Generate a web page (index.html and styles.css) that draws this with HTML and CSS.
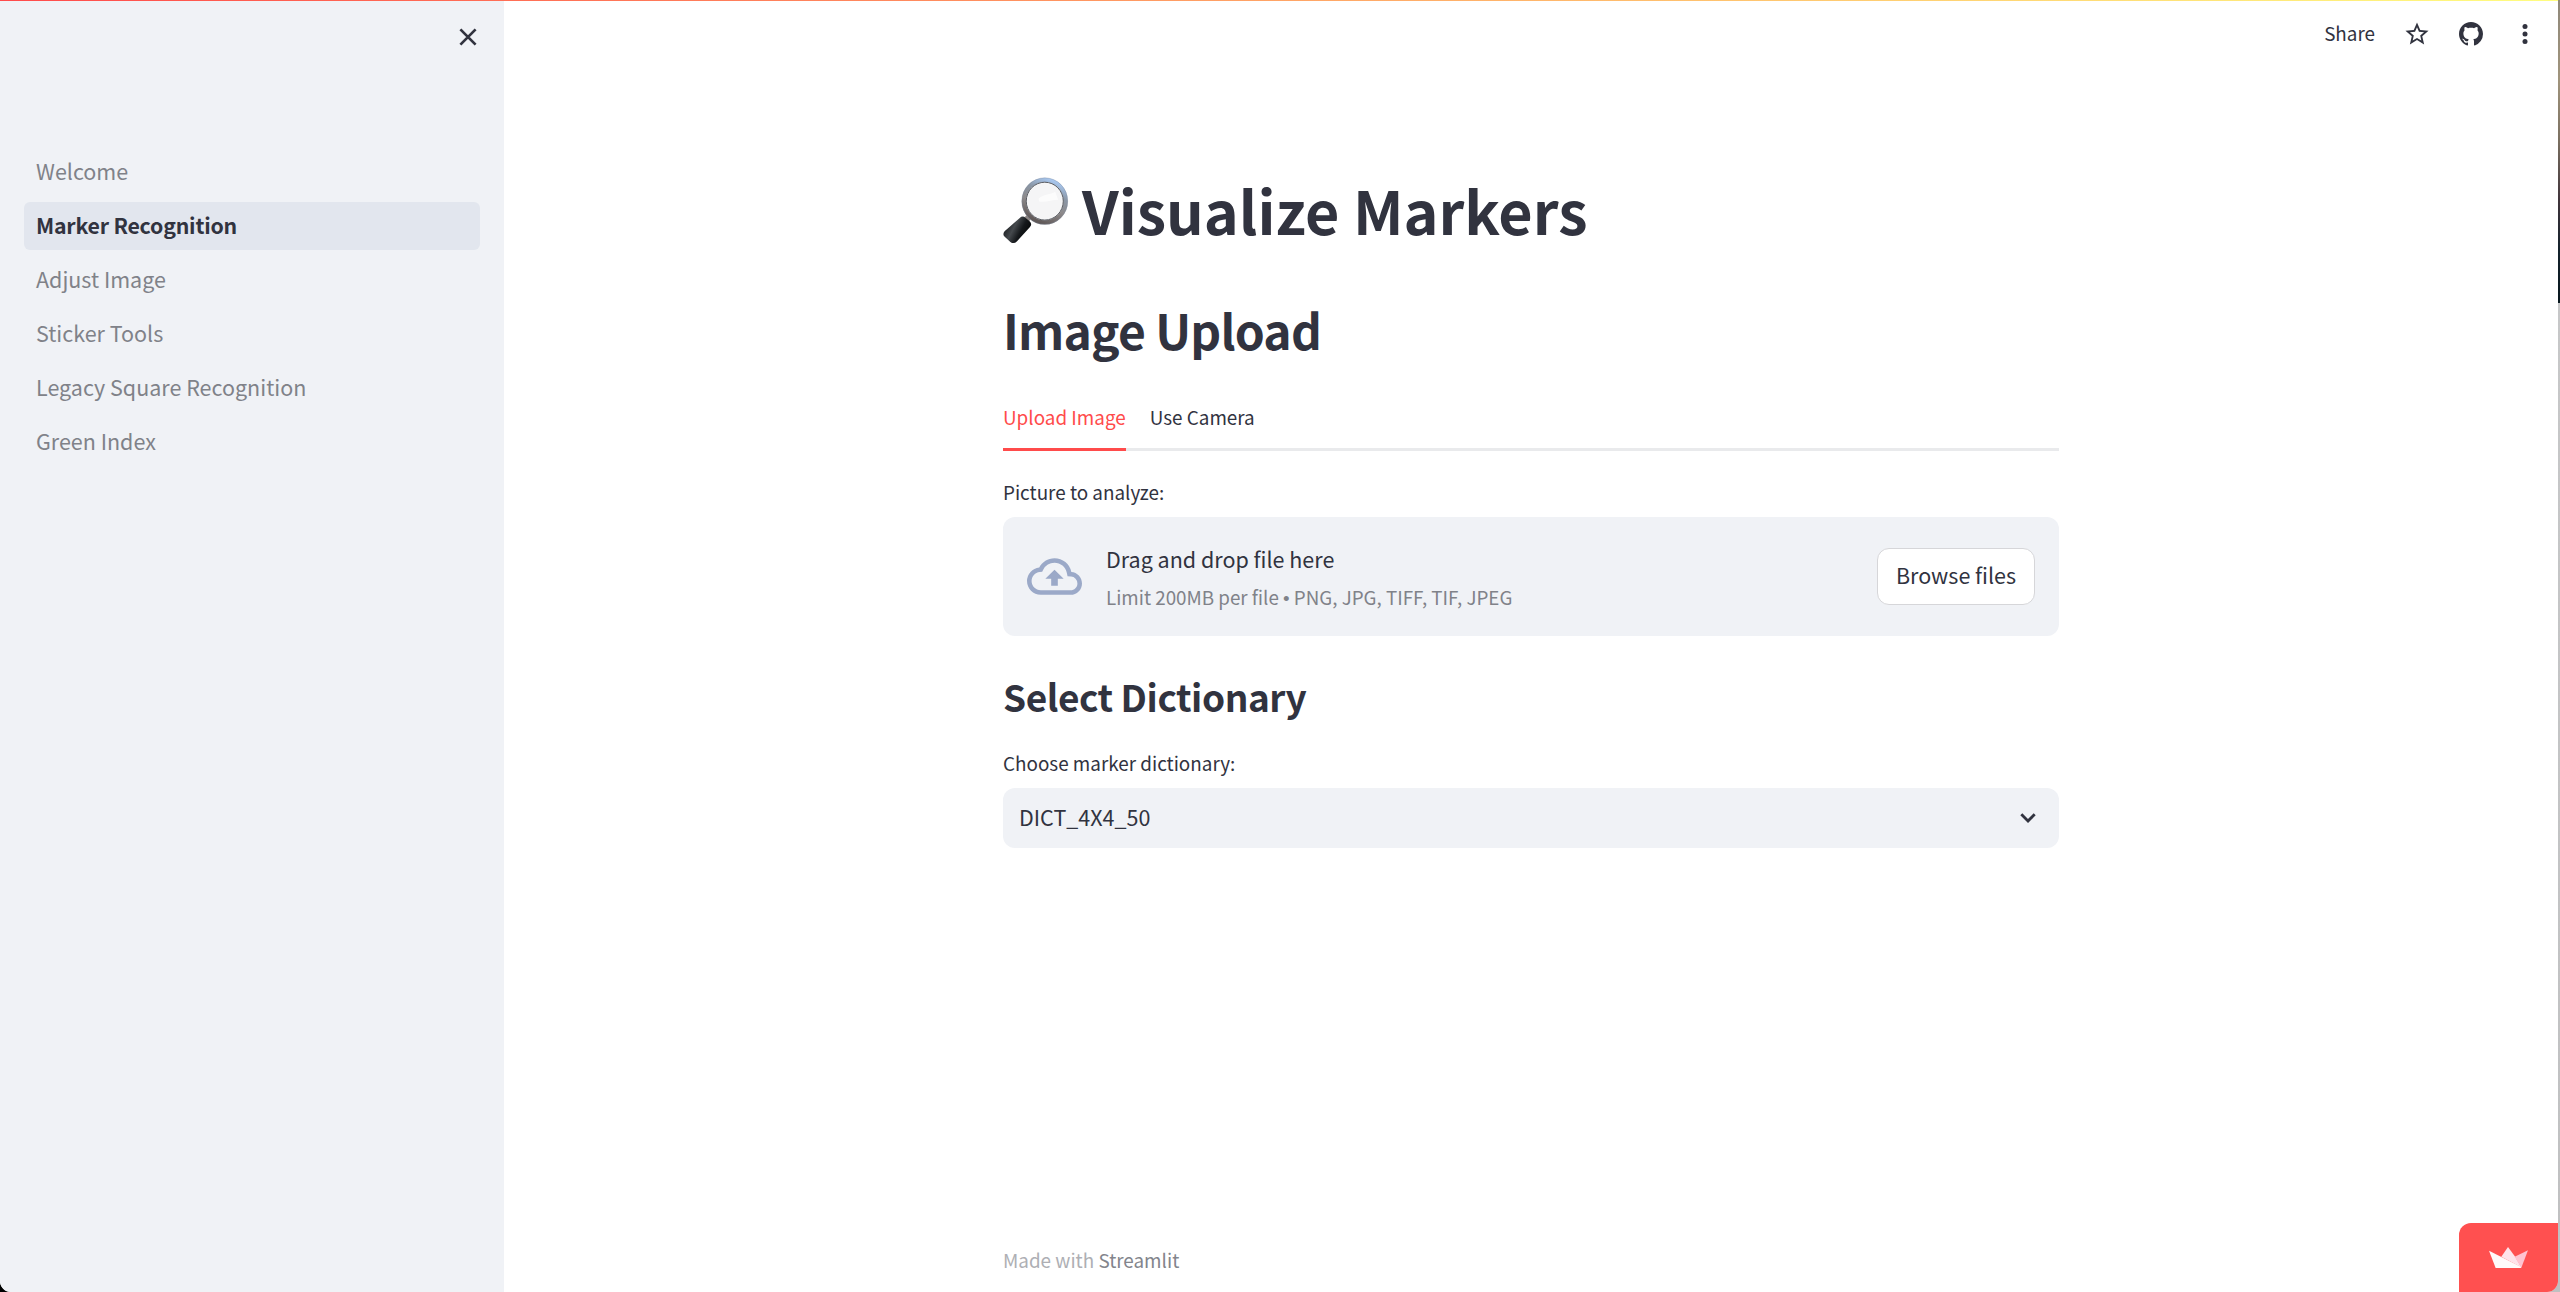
FILE: index.html
```html
<!DOCTYPE html>
<html lang="en">
<head>
<meta charset="utf-8">
<title>Marker Recognition</title>
<link rel="stylesheet" href="styles.css">
</head>
<body>
<div class="desktop">
  <div class="app">
    <div class="decoration"></div>
    <aside class="sidebar">
      <button class="close" aria-label="Close sidebar">
        <svg viewBox="0 0 18 18" width="18" height="18"><path d="M1.4 1.4 16.6 16.6M16.6 1.4 1.4 16.6" fill="none" stroke="currentColor" stroke-width="2.7"/></svg>
      </button>
      <nav class="nav">
        <a class="nav-item">Welcome</a>
        <a class="nav-item active">Marker Recognition</a>
        <a class="nav-item">Adjust Image</a>
        <a class="nav-item">Sticker Tools</a>
        <a class="nav-item">Legacy Square Recognition</a>
        <a class="nav-item">Green Index</a>
      </nav>
    </aside>
    <main class="main">
      <header class="toolbar">
        <span class="share">Share</span>
        <svg class="star" viewBox="1.6 1.6 20.8 20.8" width="24" height="24"><path fill="currentColor" d="M22 9.24l-7.19-.62L12 2 9.19 8.63 2 9.24l5.46 4.73L5.82 21 12 17.27 18.18 21l-1.63-7.03L22 9.24zM12 15.4l-3.76 2.27 1-4.28-3.32-2.88 4.38-.38L12 6.1l1.71 4.04 4.38.38-3.32 2.88 1 4.28L12 15.4z"/></svg>
        <svg class="github" viewBox="0 0 16 16" width="24" height="24"><path fill="currentColor" d="M8 0C3.58 0 0 3.58 0 8c0 3.54 2.29 6.53 5.47 7.59.4.07.55-.17.55-.38 0-.19-.01-.82-.01-1.49-2.01.37-2.53-.49-2.69-.94-.09-.23-.48-.94-.82-1.13-.28-.15-.68-.52-.01-.53.63-.01 1.08.58 1.23.82.72 1.21 1.87.87 2.33.66.07-.52.28-.87.51-1.07-1.78-.2-3.64-.89-3.64-3.95 0-.87.31-1.59.82-2.15-.08-.2-.36-1.02.08-2.12 0 0 .67-.21 2.2.82.64-.18 1.32-.27 2-.27s1.36.09 2 .27c1.53-1.04 2.2-.82 2.2-.82.44 1.1.16 1.92.08 2.12.51.56.82 1.27.82 2.15 0 3.07-1.87 3.75-3.65 3.95.29.25.54.73.54 1.48 0 1.07-.01 1.93-.01 2.2 0 .21.15.46.55.38A8.01 8.01 0 0 0 16 8c0-4.42-3.58-8-8-8z"/></svg>
        <svg class="dots" viewBox="0 0 6 22" width="6" height="22"><g fill="currentColor"><circle cx="3" cy="3.4" r="2.5"/><circle cx="3" cy="11" r="2.5"/><circle cx="3" cy="18.6" r="2.5"/></g></svg>
      </header>
      <div class="content">
        <h1 class="title">
          <svg class="magnifier" viewBox="0 0 68 68" width="67" height="67">
            <defs>
              <linearGradient id="rim" x1="0.7" y1="0" x2="0.3" y2="1">
                <stop offset="0" stop-color="#a9c9f2"/><stop offset=".3" stop-color="#8b97a6"/><stop offset=".6" stop-color="#8d8a8b"/><stop offset="1" stop-color="#5d5554"/>
              </linearGradient>
              <linearGradient id="grip" x1="0" y1="0.3" x2="1" y2="0.8">
                <stop offset="0" stop-color="#101214"/><stop offset=".35" stop-color="#45494d"/><stop offset=".6" stop-color="#15181b"/><stop offset="1" stop-color="#000"/>
              </linearGradient>
            </defs>
            <path d="M20 47 26 41" stroke="#8c8583" stroke-width="6"/>
            <ellipse cx="42.4" cy="24.5" rx="21.2" ry="21.6" fill="#f5f5f6" stroke="url(#rim)" stroke-width="4.4"/>
            <ellipse cx="42.4" cy="24.5" rx="18.8" ry="19.2" fill="none" stroke="#55585e" stroke-width="1"/>
            <ellipse cx="42.4" cy="24.5" rx="23.2" ry="23.6" fill="none" stroke="#7b889b" stroke-opacity=".5" stroke-width=".8"/>
            <path d="M36 22c6-5 12-4 17-7l3 8c-6 0-12 3-19 2z" fill="#fff" opacity=".7"/>
            <path d="M17 41.500q3-2.600 6 0l4 3.400q3 2.600.4 5.800L14 65.500q-3 3-6.500.4L2 61q-3-2.600-.4-6z" fill="url(#grip)"/>
          </svg>
          <span>Visualize Markers</span>
        </h1>
        <h2 class="heading">Image Upload</h2>
        <div class="tabs">
          <div class="tab selected">Upload Image</div>
          <div class="tab">Use Camera</div>
        </div>
        <div class="label">Picture to analyze:</div>
        <section class="dropzone">
          <svg class="cloud" viewBox="0 4 24 16" width="55" height="37"><path fill="currentColor" d="M19.35 10.04A7.49 7.49 0 0 0 12 4C9.110 4 6.600 5.640 5.350 8.040A5.994 5.994 0 0 0 0 14c0 3.310 2.690 6 6 6h13c2.760 0 5-2.240 5-5 0-2.640-2.050-4.780-4.650-4.960zM19 18H6c-2.210 0-4-1.790-4-4 0-2.050 1.530-3.760 3.560-3.970l1.070-.11.5-.95A5.469 5.469 0 0 1 12 6c2.620 0 4.880 1.860 5.390 4.430l.3 1.500 1.530.11A2.980 2.980 0 0 1 22 15c0 1.650-1.350 3-3 3zM8 13h2.550v3h2.900v-3H16l-4-4-4 4z"/></svg>
          <div class="drop-text">
            <span class="drop-main">Drag and drop file here</span>
            <span class="drop-hint">Limit 200MB per file <span class="bullet">•</span> PNG, JPG, TIFF, TIF, JPEG</span>
          </div>
          <button class="browse">Browse files</button>
        </section>
        <h3 class="subheading">Select Dictionary</h3>
        <div class="label">Choose marker dictionary:</div>
        <div class="select">
          <span>DICT_4X4_50</span>
          <svg viewBox="0 0 16 10" width="16" height="10"><path d="M1.300 1.300 8 8 14.700 1.300" fill="none" stroke="currentColor" stroke-width="2.800"/></svg>
        </div>
      </div>
      <footer class="footer">Made with <a class="brand">Streamlit</a></footer>
      <div class="badge">
        <svg viewBox="207 170 117 63" width="39" height="21"><path d="M264 170 244 199 304 231 286 200z" fill="#ffe3ea"/><path d="M324 180 284 199 304 232z" fill="#ffc3d0"/><path d="M207 181 304 230 302 233 227 233z" fill="#fffafa"/></svg>
      </div>
    </main>
  </div>
</div>
</body>
</html>
```
FILE: styles.css
```css
* {
  box-sizing: border-box;
}

body {
  margin: 0;
  font-family: "Noto Sans CJK SC", "Noto Sans", sans-serif;
  font-size: 21.5px;
  color: #31333f;
}

h1, h2, h3 {
  margin: 0;
  font-weight: 700;
  white-space: nowrap;
}

svg {
  display: block;
  flex: none;
}

button {
  font: inherit;
  color: inherit;
}

/* The strip of desktop that shows beside the window */
.desktop {
  width: 2560px;
  height: 1292px;
  padding-right: 2px;
  overflow: hidden;
  background:
    linear-gradient(#000, #000) 0 100% / 20px 20px no-repeat,
    linear-gradient(#8f887a 0, #a0947c 80px, #7b7061 140px, #40343b 200px, #14222c 250px, #08171e 303px, #c6c7c8 303px, #bfc0c1 100%);
}

.app {
  position: relative;
  display: flex;
  width: 2558px;
  height: 1292px;
  background: #fff;
  border-radius: 0 0 11px 11px;
  overflow: hidden;
}

.decoration {
  position: absolute;
  inset: 0 0 auto;
  height: 1px;
  background: linear-gradient(90deg, #ff4b4b, #fffd80);
}

.sidebar {
  width: 504px;
  padding-top: 28px;
  background: #f0f2f6;
}

.close {
  display: block;
  margin: 0 27px 0 auto;
  padding: 0;
  border: 0;
  background: none;
}

.nav {
  display: flex;
  flex-direction: column;
  gap: 6px;
  padding: 102px 24px 0;
}

.nav-item {
  height: 48px;
  padding-left: 12px;
  line-height: 45px;
  color: #808289;
  border-radius: 6px;
}

.nav-item.active {
  background: #e2e6ee;
  color: #31333f;
  font-size: 21.3px;
  font-weight: 700;
  letter-spacing: -0.2px;
}

.main {
  flex: 1;
  display: flex;
  flex-direction: column;
  position: relative;
}

.toolbar {
  display: flex;
  justify-content: flex-end;
  align-items: center;
  height: 68px;
  padding-right: 30px;
}

.share {
  margin: -3px 30px 0 0;
  font-size: 18.86px;
  line-height: 27px;
}

.star {
  margin-right: 30px;
}

.github {
  margin-right: 39px;
}

.content {
  width: 1056px;
  margin: 101px auto 0;
}

.title {
  display: flex;
  height: 80px;
  font-size: 59.25px;
  line-height: 80px;
}

.magnifier {
  margin: 8px 12px 0 0;
}

.heading {
  margin-top: 48px;
  font-size: 48px;
  line-height: 64px;
  letter-spacing: -0.8px;
}

.tabs {
  display: flex;
  gap: 24px;
  height: 65px;
  margin: 25px 0 27px;
  font-size: 18.86px;
  line-height: 61px;
  box-shadow: inset 0 -3px #e9eaec;
}

.tab.selected {
  color: #ff4b4b;
  border-bottom: 3px solid #ff4b4b;
}

.label {
  margin-bottom: 12px;
  font-size: 18.86px;
  line-height: 27px;
}

.dropzone {
  display: flex;
  align-items: center;
  height: 119px;
  padding: 0 24px;
  background: #f0f2f6;
  border-radius: 12px;
}

.cloud {
  margin-right: 24px;
  color: #9ba9c8;
}

.drop-text {
  display: flex;
  flex-direction: column;
  gap: 7px;
  padding-bottom: 2px;
}

.drop-main {
  line-height: 35px;
}

.drop-hint {
  font-size: 18.8px;
  line-height: 27px;
  color: #808289;
}

.bullet {
  font-family: "Liberation Sans", sans-serif;
  line-height: 1;
}

.browse {
  width: 158px;
  height: 57px;
  margin-left: auto;
  padding: 0 0 4px;
  background: #fff;
  border: 1px solid #d6d6d9;
  border-radius: 12px;
}

.subheading {
  margin: 35px 0 28px;
  font-size: 37px;
  line-height: 50px;
  letter-spacing: -0.45px;
}

.select {
  display: flex;
  justify-content: space-between;
  height: 60px;
  padding: 0 23px 0 16px;
  line-height: 57px;
  background: #f0f2f6;
  border-radius: 12px;
}

.select svg {
  margin-top: 25px;
}

.footer {
  width: 1056px;
  margin: auto auto 19px;
  font-size: 18.86px;
  line-height: 27px;
  color: #aeafb4;
}

.brand {
  color: #83858c;
}

.badge {
  position: absolute;
  right: 0;
  bottom: 0;
  width: 99px;
  height: 69px;
  padding: 24px 0 0 30px;
  background: #ff5050;
  border-radius: 12px 0 0 0;
}
```
